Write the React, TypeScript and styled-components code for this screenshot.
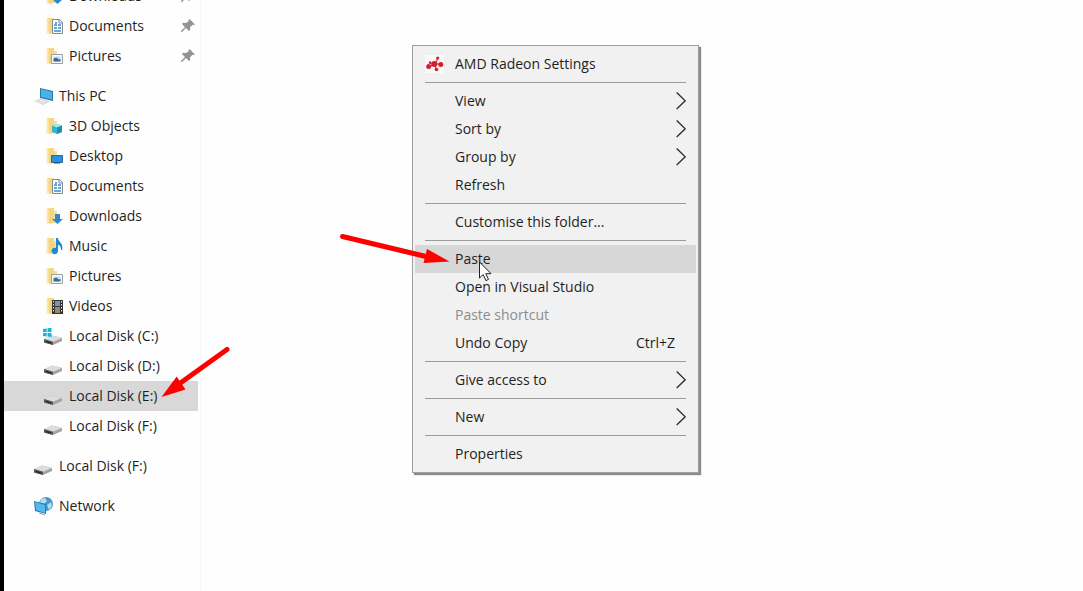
import React from 'react';
import styled, { createGlobalStyle } from 'styled-components';

const GlobalStyle = createGlobalStyle`
  * { box-sizing: border-box; }
  body { margin: 0; background: #fefefe; }
`;

const Window = styled.div`
  position: relative;
  display: flex;
  height: 100vh;
  overflow: hidden;
  border-left: 4px solid #000;
  background: #fefefe;
  color: #1f1f1f;
  font: 14px/20px 'Open Sans', 'Noto Sans', sans-serif;
`;

const Sidebar = styled.nav`
  flex: 0 0 197px;
  padding-right: 2px;
  border-right: 1px solid #f7f7f7;
  overflow: hidden;
`;

const Tree = styled.div`
  display: flex;
  flex-direction: column;
  gap: 10px;
  margin-top: -19px;
`;

const Group = styled.ul`
  list-style: none;
  margin: 0;
  padding: 0;
`;

const NavLink = styled.a<{ $root?: boolean; $selected?: boolean }>`
  display: flex;
  align-items: center;
  gap: 6px;
  height: 30px;
  padding-left: ${p => (p.$root ? 29 : 39)}px;
  padding-right: 3px;
  background: ${p => (p.$selected ? '#d8d8d8' : 'transparent')};
  color: inherit;
  text-decoration: none;
  white-space: nowrap;
`;

const NavText = styled.span`
  flex: 1;
`;

const Content = styled.main`
  flex: 1;
`;

const Menu = styled.div`
  position: absolute;
  left: 408px;
  top: 45px;
  width: 287px;
  padding: 4px 2px;
  border: 1px solid #a0a0a0;
  background: #f1f1f1;
  box-shadow: 2px 2px 1px #8c8c8c;
`;

const MenuButton = styled.button<{ $hot?: boolean }>`
  display: flex;
  align-items: center;
  width: 100%;
  height: 28px;
  padding: 0 10px;
  border: 0;
  background: ${p => (p.$hot ? '#d7d7d7' : 'transparent')};
  color: inherit;
  font: inherit;
  text-align: left;
  &:disabled { color: #8c8c8c; }
`;

const MenuIcon = styled.span`
  display: flex;
  width: 30px;
`;

const MenuText = styled.span`
  flex: 1;
`;

const Shortcut = styled.kbd`
  padding-right: 11px;
  font: inherit;
`;

const Separator = styled.hr`
  height: 1px;
  margin: 4px 10px;
  border: 0;
  background: #9b9b9b;
`;

const Overlay = styled.svg`
  position: absolute;
  left: 0;
  top: 0;
  pointer-events: none;
`;

type Kind =
  | 'downloads' | 'documents' | 'pictures' | 'pc' | 'objects' | 'desktop'
  | 'music' | 'videos' | 'system' | 'disk' | 'network';

const Folder = () => (
  <>
    <path d="M4 2h7v3h3v12H5l-1-1z" fill="#f8df93" />
    <path d="M5 3l5-1 1 1v14l-5 1z" fill="#f5d67c" />
    <path d="M3.500 2l2 1v15l-2-1z" fill="#fbe9b4" />
  </>
);

const Disk = () => (
  <>
    <path d="M1 13.500l8-4 10 2.500v3l-9 4-9-2.500z" fill="#a3a3a3" />
    <path d="M1 13l8-3.500L19 12l-9 3.800z" fill="#dcdcdc" />
    <path d="M1 13l9 2.800V19l-9-2.500z" fill="#555" />
    <path d="M3 15.500l5 1.500" stroke="#1e1e1e" />
  </>
);

const glyphs: Record<Kind, React.ReactNode> = {
  downloads: (
    <>
      <Folder />
      <path d="M12 8h5v5h3l-5.500 5L9 13h3z" fill="#2f86d2" />
    </>
  ),
  documents: (
    <>
      <Folder />
      <path d="M9.500 3.500h7l3 3v11h-10z" fill="#fbfdff" stroke="#7b8b98" />
      <path d="M16 3.500v3.500h3.500" fill="none" stroke="#7b8b98" />
      <path d="M11 9h3M15 9h3M11 12h3M15 12h3M11 15h7M12 7h2" stroke="#3f8cc6" strokeWidth="1.400" />
    </>
  ),
  pictures: (
    <>
      <Folder />
      <path d="M8.500 8.500h11v9h-11z" fill="#f7fafc" stroke="#93a1ad" />
      <path d="M10.500 10.500h7v5h-7z" fill="#c4dcec" />
      <path d="M10.500 15.500v-3l3-1 2 2 2-.5v2.500z" fill="#41698c" />
    </>
  ),
  pc: (
    <>
      <path d="M7 2l13 3v10L7 12z" fill="#30779f" />
      <path d="M8 3l11 3v7.500L8 11z" fill="#45b3ee" />
      <path d="M1 15l7-2.500 9 3L10 19z" fill="#d3d8dd" />
      <path d="M4 15l7 2.300M7 14l6 2" stroke="#f5f7f9" strokeWidth=".8" />
    </>
  ),
  objects: (
    <>
      <Folder />
      <path d="M9 9.500L14 8l5 1.500V16l-5 2-5-2z" fill="#35b4cf" />
      <path d="M9 9.500L14 8l5 1.500-5 2z" fill="#a6e8f2" />
      <path d="M14 11.500l5-2V16l-5 2z" fill="#1d93b3" />
    </>
  ),
  desktop: (
    <>
      <Folder />
      <path d="M8.500 9.500h11v7h-11z" fill="#2593e2" stroke="#286796" />
      <path d="M11 17h6" stroke="#1c4d75" />
    </>
  ),
  music: (
    <>
      <Folder />
      <path d="M13 2h2c0 4 6 5 4 12h-1c0-3-1-5-3-5v6a3.200 3.200 0 1 1-2-3z" fill="#1f8ad2" />
    </>
  ),
  videos: (
    <>
      <Folder />
      <path d="M9 4h11v14H9z" fill="#343434" />
      <path d="M12 5h5v5h-5z" fill="#7f94ad" />
      <path d="M12 11h5v6h-5z" fill="#8b8f73" />
      <path d="M10.500 5v12M18.500 5v12" stroke="#ddd" strokeDasharray="1.500 1.500" />
    </>
  ),
  system: (
    <>
      <Disk />
      <path d="M0 3l3.700-.6V6H0zM4.500 2.300L8.500 1.700V6h-4zM0 7h3.700v3.600L0 10zM4.500 7h4v4l-4-.5z" fill="#16b2e4" />
    </>
  ),
  disk: <Disk />,
  network: (
    <>
      <circle cx="13" cy="8" r="7" fill="#4b96c8" />
      <path d="M8 3l4-1 2 3-3 3-4-1zM14 9l4-3 1 4-3 4z" fill="#b4dcec" />
      <path d="M1 5l12 3v10L2 15z" fill="#2678b2" />
      <path d="M2 6l10 3v8L3 14z" fill="#52baf3" />
      <path d="M6 17l6 2" stroke="#8fa3b0" />
    </>
  ),
};

const Icon = ({ kind }: { kind: Kind }) => (
  <svg width="20" height="20" viewBox="0 0 20 20" aria-hidden="true">{glyphs[kind]}</svg>
);

const Pin = () => (
  <svg width="14" height="14" viewBox="0 0 14 14" aria-hidden="true">
    <path d="M8.500 0L14 5.500l-1.500.5-1-.2-2.500 2.500.2 2.700-1.200 1L5 9 1 13H0v-1l4-4-3-3 1-1.200 2.900.2L7.500 2.500l-.2-1z" fill="#8f9499" />
  </svg>
);

const Chevron = () => (
  <svg width="10" height="18" viewBox="0 0 10 18" aria-hidden="true">
    <path d="M.7 0.500L9.200 8.800.7 17" fill="none" stroke="#2b2b2b" strokeWidth="1.300" />
  </svg>
);

const Radeon = () => (
  <svg width="20" height="20" viewBox="0 0 20 20" aria-hidden="true">
    <path d="M0 1h19v18H0z" fill="#fafafa" />
    <path d="M4 13l5-3h7M10 10l3-6M10 10l1 6M4 9l5 1" stroke="#dd5059" strokeWidth="1.500" fill="none" />
    <g fill="#d51f2e">
      <circle cx="9.300" cy="10" r="3" />
      <circle cx="3.700" cy="12.500" r="2.500" />
      <circle cx="15.800" cy="10.500" r="2.500" />
      <circle cx="12.700" cy="4" r="1.600" />
      <circle cx="11.500" cy="15.500" r="1.800" />
      <circle cx="5" cy="8.500" r="1.200" />
    </g>
  </svg>
);

type Entry = { label: string; kind: Kind; root?: boolean; pinned?: boolean; selected?: boolean };

const tree: Entry[][] = [
  [
    { label: 'Downloads', kind: 'downloads', pinned: true },
    { label: 'Documents', kind: 'documents', pinned: true },
    { label: 'Pictures', kind: 'pictures', pinned: true },
  ],
  [
    { label: 'This PC', kind: 'pc', root: true },
    { label: '3D Objects', kind: 'objects' },
    { label: 'Desktop', kind: 'desktop' },
    { label: 'Documents', kind: 'documents' },
    { label: 'Downloads', kind: 'downloads' },
    { label: 'Music', kind: 'music' },
    { label: 'Pictures', kind: 'pictures' },
    { label: 'Videos', kind: 'videos' },
    { label: 'Local Disk (C:)', kind: 'system' },
    { label: 'Local Disk (D:)', kind: 'disk' },
    { label: 'Local Disk (E:)', kind: 'disk', selected: true },
    { label: 'Local Disk (F:)', kind: 'disk' },
  ],
  [{ label: 'Local Disk (F:)', kind: 'disk', root: true }],
  [{ label: 'Network', kind: 'network', root: true }],
];

type Command = {
  label: string;
  icon?: boolean;
  submenu?: boolean;
  hot?: boolean;
  disabled?: boolean;
  shortcut?: string;
};

const commands: Command[][] = [
  [{ label: 'AMD Radeon Settings', icon: true }],
  [
    { label: 'View', submenu: true },
    { label: 'Sort by', submenu: true },
    { label: 'Group by', submenu: true },
    { label: 'Refresh' },
  ],
  [{ label: 'Customise this folder...' }],
  [
    { label: 'Paste', hot: true },
    { label: 'Open in Visual Studio' },
    { label: 'Paste shortcut', disabled: true },
    { label: 'Undo Copy', shortcut: 'Ctrl+Z' },
  ],
  [{ label: 'Give access to', submenu: true }],
  [{ label: 'New', submenu: true }],
  [{ label: 'Properties' }],
];

export default function App() {
  return (
    <Window>
      <GlobalStyle />
      <Sidebar aria-label="Folders">
        <Tree>
          {tree.map((group, i) => (
            <Group key={i}>
              {group.map(e => (
                <li key={e.label}>
                  <NavLink href="#" $root={e.root} $selected={e.selected}>
                    <Icon kind={e.kind} />
                    <NavText>{e.label}</NavText>
                    {e.pinned && <Pin />}
                  </NavLink>
                </li>
              ))}
            </Group>
          ))}
        </Tree>
      </Sidebar>
      <Content />
      <Menu role="menu">
        {commands.map((group, i) => (
          <React.Fragment key={i}>
            {i > 0 && <Separator />}
            {group.map(c => (
              <MenuButton key={c.label} type="button" role="menuitem" $hot={c.hot} disabled={c.disabled}>
                <MenuIcon>{c.icon && <Radeon />}</MenuIcon>
                <MenuText>{c.label}</MenuText>
                {c.shortcut && <Shortcut>{c.shortcut}</Shortcut>}
                {c.submenu && <Chevron />}
              </MenuButton>
            ))}
          </React.Fragment>
        ))}
      </Menu>
      <Overlay width="500" height="420" viewBox="4 0 500 420" aria-hidden="true">
        <g stroke="#f00" strokeWidth="5" strokeLinecap="round">
          <path d="M342.500 236.500L428 257" />
          <path d="M227 349.500L179 384" />
        </g>
        <path d="M449.500 261.500L427 249l-3.500 14zM161.500 397l15.200-20.500 8.800 13z" fill="#f00" />
        <path d="M479.500 262v16l3.700-3.400 2.700 6 2.600-1.200-2.700-5.700h5.200z" fill="#fff" stroke="#222" />
      </Overlay>
    </Window>
  );
}
